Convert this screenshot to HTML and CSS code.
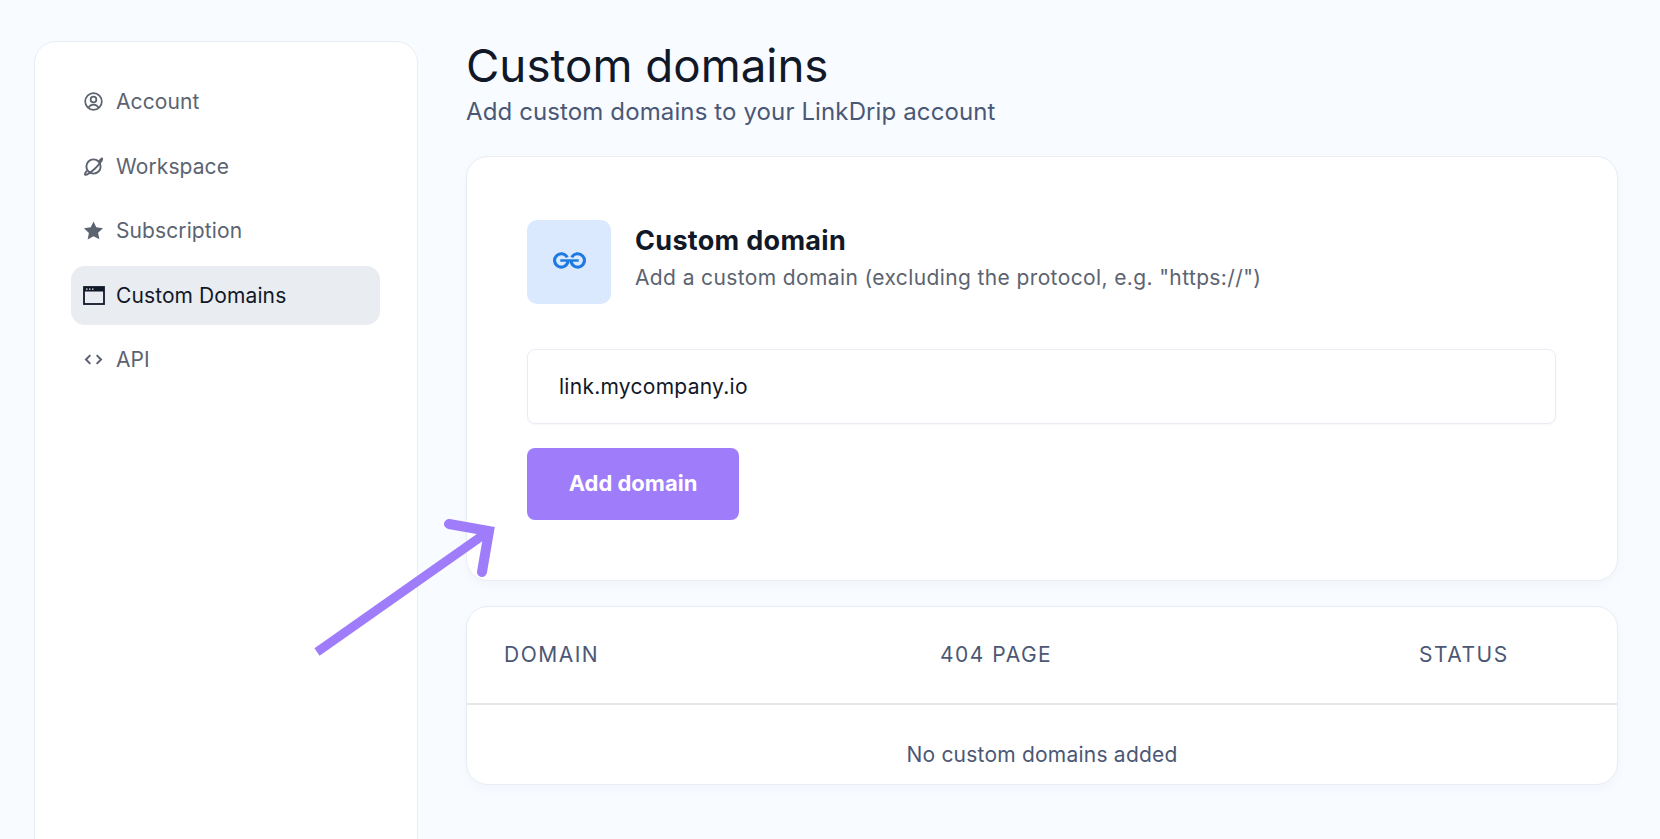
FILE: index.html
```html
<!DOCTYPE html>
<html>
	<head>
		<meta charset="utf-8">
		<title>Custom domains</title>
		<link rel="stylesheet" href="styles.css">
	</head>
	<body>
		<div class="page">
			<aside class="sidebar">
				<a href="#" class="nav-item">
					<svg class="nav-icon" viewBox="0 0 24 24" fill="none" stroke="currentColor" stroke-width="2.200"><circle cx="12" cy="12" r="10.500"/><circle cx="12" cy="9.500" r="3.600"/><path d="M5.500 20c1.400-3 3.600-4.200 6.500-4.200s5.100 1.200 6.500 4.200"/></svg>
					<span>Account</span>
				</a>
				<a href="#" class="nav-item">
					<svg class="nav-icon" viewBox="0 0 24 24" fill="none" stroke="currentColor" stroke-width="2.400"><circle cx="12" cy="12" r="9"/><path d="M19 5.500C20.500 3.500 22.500 1.500 23 2c.8.800-3.500 7.500-9 12.500S3.500 23 1.500 22.500c-.8-.2 0-2.500 2-5"/></svg>
					<span>Workspace</span>
				</a>
				<a href="#" class="nav-item">
					<svg class="nav-icon" viewBox="0 0 24 24" fill="currentColor"><path d="M12 .5l3.500 7.500 8.500 1.100-6.200 5.700 1.600 8.200L12 19.300l-7.400 4.200 1.600-8.200L0 9.100 8.500 8z"/></svg>
					<span>Subscription</span>
				</a>
				<a href="#" class="nav-item active">
					<svg class="nav-icon wide" viewBox="0 0 22 19" fill="none"><rect x="1" y="1" width="20" height="17" stroke="currentColor" stroke-width="1.800"/><rect x="1" y="1" width="20" height="4.500" fill="currentColor"/><path d="M3 3.200h1.500M6 3.200h1.500M9 3.200h1.500" stroke="#e9ecf1" stroke-width="1.300"/></svg>
					<span>Custom Domains</span>
				</a>
				<a href="#" class="nav-item">
					<svg class="nav-icon" viewBox="0 0 24 24" fill="none" stroke="currentColor" stroke-width="2.600"><path d="M8 6.500L2.500 12 8 17.500M16 6.500l5.500 5.500-5.500 5.500"/></svg>
					<span>API</span>
				</a>
			</aside>

			<main class="content">
				<h1 class="title">Custom domains</h1>
				<p class="subtitle">Add custom domains to your LinkDrip account</p>

				<section class="card form-card">
					<div class="form-head">
						<div class="icon-box">
							<svg class="link-icon" viewBox="0 0 36 16" width="37" height="17" fill="none" stroke="#1e7ae0" stroke-width="3"><path d="M15.800 5A6.500 6.500 0 1 0 16.500 8"/><path d="M20.200 5A6.500 6.500 0 1 1 19.500 8"/><path d="M9 8h18" stroke-width="2.400"/></svg>
						</div>
						<div>
							<h2 class="form-title">Custom domain</h2>
							<p class="form-text">Add a custom domain (excluding the protocol, e.g. "https://")</p>
						</div>
					</div>
					<input class="domain-input" type="text" value="link.mycompany.io">
					<button class="add-btn">Add domain</button>
				</section>

				<section class="card table-card">
					<div class="table-head">
						<span class="col-domain">DOMAIN</span>
						<span class="col-page">404 PAGE</span>
						<span class="col-status">STATUS</span>
					</div>
					<p class="empty">No custom domains added</p>
				</section>
			</main>
		</div>

		<svg class="arrow" width="200" height="150" viewBox="0 0 200 150" fill="none" stroke="#9f7cfa" stroke-width="9">
			<path d="M5 135L177 14"/>
			<path d="M137 7l40 7-7 41" stroke-width="10" stroke-linecap="round"/>
		</svg>
	</body>
</html>
```

FILE: styles.css
```css
*{margin:0;padding:0;box-sizing:border-box;}
a{text-decoration:none;}
html,body{height:100%;overflow:hidden;}
body{background:#f8fbff;font-family:"Inter","Noto Sans",sans-serif;color:#111827;position:relative;}

.page{display:flex;gap:48px;padding:41px 42px 0 34px;height:100%;}

.sidebar{width:384px;height:900px;flex:none;background:#fff;border:1px solid #e9edf3;border-radius:22px;padding:30px 37px 30px 36px;display:flex;flex-direction:column;gap:5.500px;}
.nav-item{height:59px;display:flex;align-items:center;gap:13px;padding-left:13px;border-radius:14px;color:#5c6370;font-size:21px;letter-spacing:0.100px;}
.nav-item.active{background:#e9ecf1;color:#111827;}
.nav-icon{width:19px;height:19px;flex:none;}
.nav-icon.wide{width:22px;height:19px;margin-left:-1px;margin-right:-2px;}

.content{flex:1;min-width:0;}
.title{font-size:45.700px;font-weight:400;line-height:50px;color:#111827;}
.subtitle{font-size:24px;letter-spacing:0.120px;line-height:30px;color:#4b5875;margin-top:6px;}

.card{background:#fff;border:1px solid #e9edf3;border-radius:22px;box-shadow:0 4px 12px rgba(30,50,90,0.03);}
.form-card{margin-top:29px;height:425px;padding:63px 61px 0 60px;}
.form-head{display:flex;gap:24px;align-items:center;}
.icon-box{width:84px;height:84px;padding-bottom:3px;background:#dbe9ff;border-radius:10px;display:flex;align-items:center;justify-content:center;}
.form-title{font-size:27px;font-weight:700;letter-spacing:0.300px;line-height:34px;color:#111827;margin-bottom:6px;margin-top:-9px;}
.form-text{font-size:21px;letter-spacing:0.380px;line-height:28px;color:#5c6370;}

.domain-input{display:block;width:100%;height:75px;margin-top:45px;padding:0 31px;border:1px solid #e9edf3;border-radius:8px;font-family:inherit;font-size:21px;letter-spacing:0.270px;color:#111827;background:#fff;box-shadow:0 1px 2px rgba(30,50,90,0.04);outline:none;}

.add-btn{display:block;width:212px;height:72px;margin-top:24px;padding-bottom:2px;background:#9f7cfa;color:#fff;border:none;border-radius:8px;font-family:inherit;font-size:22px;font-weight:700;}

.table-card{margin-top:25px;height:179px;}
.table-head{height:98px;padding:0 0 2px 37px;border-bottom:2px solid #e5e7eb;display:grid;grid-template-columns:436px 479px 1fr;align-items:center;font-size:21px;letter-spacing:1.500px;color:#4b5875;}
.empty{text-align:center;font-size:21px;letter-spacing:0.220px;line-height:28px;margin-top:36px;color:#4b5875;}

.arrow{position:absolute;left:312px;top:517px;}
```
